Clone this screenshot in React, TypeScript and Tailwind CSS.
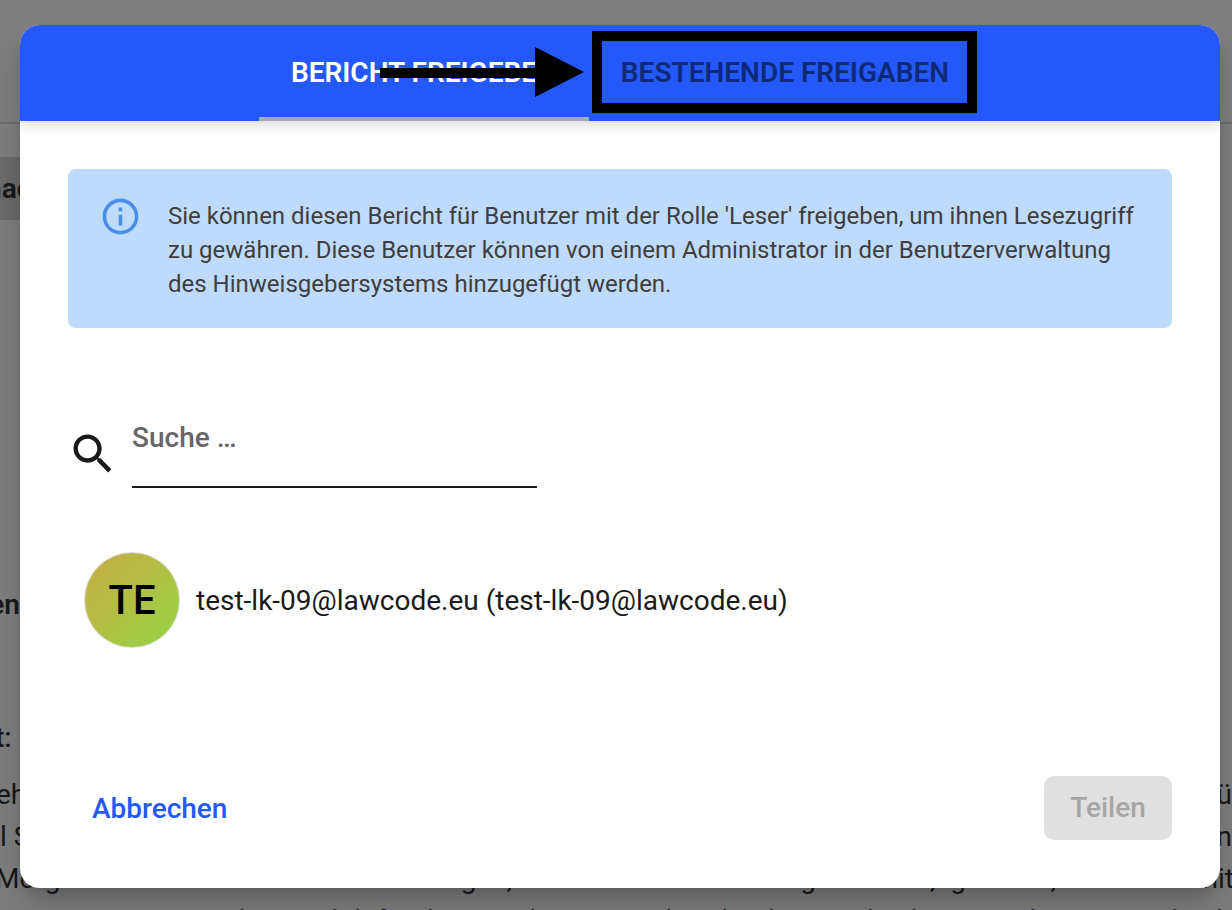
const lineThree = 'Morgen wurde ich von einem Kollegen, den ich seit Jahren gut kenne, gebeten, mir dies mit';
const lineFour = 'zusammen anzusehen und dafür die Unterlagen aus der Abteilung in den kommenden Tagen abzuholen';

export default function App() {
  return (
    <div className="relative h-[910px] w-[1232px] overflow-hidden bg-white font-['Roboto',sans-serif]">
      {/* Seite im Hintergrund */}
      <div className="h-[124px] border-b-2 border-[#dcdcdc]" />
      <div className="mt-[33px] flex h-[63px] w-[120px] items-center overflow-hidden bg-[#d6d6d6]">
        <span className="-ml-[14px] text-[28px] font-semibold text-[#333]">nachricht</span>
      </div>
      <div className="mt-[364px] flex h-[42px] w-[20px] justify-end overflow-hidden text-[28px] leading-[42px] font-semibold text-[#333]">
        <span>en</span>
      </div>
      <div className="mt-[91px] -ml-[5px] h-[42px] text-[28px] leading-[42px] font-medium text-[#333]">t:</div>
      <div className="mt-[15px] text-[28px] leading-[42px] whitespace-nowrap text-[#333]">
        <div className="-ml-[4px] flex justify-between"><span>eh</span><span>rü</span></div>
        <div className="flex justify-between"><span>l S</span><span>n</span></div>
        <p className="-ml-[5px] -mr-[2px] whitespace-normal [text-align-last:justify]">{lineThree}</p>
        <p className="pl-[4px]">{lineFour}</p>
      </div>

      {/* Abdunklung */}
      <div className="absolute inset-0 bg-black/50" />

      {/* Dialog */}
      <div className="absolute top-[25px] left-[20px] flex h-[863px] w-[1200px] flex-col overflow-hidden rounded-[20px] bg-white shadow-[0_11px_15px_-7px_rgba(0,0,0,0.2),0_24px_38px_3px_rgba(0,0,0,0.14)]">
        <div className="flex h-[96px] shrink-0 justify-center bg-[#2458f8] shadow-[0_4px_12px_rgba(0,0,0,0.15)]">
          <button className="h-full border-b-4 border-[#9fa8c0] px-[32px] pt-[4px] text-[28px] font-semibold text-white">
            BERICHT FREIGEBEN
          </button>
          <button className="h-full border-b-4 border-transparent px-[32px] pt-[4px] text-[28px] font-semibold text-[#0d2a78]">
            BESTEHENDE FREIGABEN
          </button>
        </div>

        <div className="flex flex-1 flex-col px-[48px] pt-[48px] pb-[48px]">
          <div className="flex h-[159px] shrink-0 gap-[26px] rounded-[8px] bg-[#bedbfb] pt-[30px] pr-[30px] pl-[31px]">
            <svg className="-mt-[4px] h-[43px] w-[43px] shrink-0 text-[#4a8ee6]" viewBox="0 0 24 24" fill="currentColor">
              <path d="M11 7h2v2h-2zm0 4h2v6h-2zm1-9C6.48 2 2 6.48 2 12s4.48 10 10 10 10-4.48 10-10S17.52 2 12 2zm0 18c-4.41 0-8-3.59-8-8s3.59-8 8-8 8 3.59 8 8-3.59 8-8 8z" />
            </svg>
            <p className="text-[24px] leading-[34px] text-[#3e3e3e]">
              Sie können diesen Bericht für Benutzer mit der Rolle 'Leser' freigeben, um ihnen Lesezugriff zu gewähren. Diese Benutzer können von einem Administrator in der Benutzerverwaltung des Hinweisgebersystems hinzugefügt werden.
            </p>
          </div>

          <div className="mt-[88px] -ml-[1px] flex items-start gap-[13px]">
            <svg className="mt-[12px] h-[52px] w-[52px] shrink-0 text-[#1a1a1a]" viewBox="0 0 24 24" fill="currentColor">
              <path d="M15.5 14h-.79l-.28-.27C15.41 12.59 16 11.11 16 9.5 16 5.91 13.09 3 9.5 3S3 5.91 3 9.5 5.91 16 9.5 16c1.61 0 3.09-.59 4.23-1.57l.27.28v.79l5 4.99L20.49 19l-4.99-5zm-6 0C7.01 14 5 11.99 5 9.5S7.01 5 9.5 5 14 7.01 14 9.5 11.99 14 9.5 14z" />
            </svg>
            <input
              placeholder="Suche …"
              className="h-[72px] w-[405px] border-b-2 border-[#1a1a1a] pb-[28px] text-[28px] font-medium outline-none placeholder:text-[#666]"
            />
          </div>

          <div className="mt-[64px] flex items-center gap-[16px] pl-[16px]">
            <div className="flex h-[96px] w-[96px] items-center justify-center rounded-full border border-[#ddd] bg-gradient-to-br from-[#c9ab45] to-[#90d445] pt-[2px] text-[40px] font-medium text-black">
              TE
            </div>
            <span className="pt-[2px] text-[28px] text-[#1a1a1a]">test-lk-09@lawcode.eu (test-lk-09@lawcode.eu)</span>
          </div>

          <div className="mt-auto flex items-center justify-between">
            <button className="pt-[2px] pl-[24px] text-[28px] font-medium text-[#2458f8]">Abbrechen</button>
            <button className="h-[64px] w-[128px] rounded-[10px] bg-[#e0e0e0] text-[28px] font-medium text-[#a6a6a6]">Teilen</button>
          </div>
        </div>
      </div>

      {/* Markierung: Pfeil und Rahmen */}
      <svg className="absolute top-[47px] left-[380px]" width="204" height="50" viewBox="0 0 204 50">
        <path d="M0 21h155V0l49 25-49 25V31H0z" fill="#000" />
      </svg>
      <div className="absolute top-[31px] left-[592px] h-[82px] w-[385px] border-[10px] border-black" />
    </div>
  );
}
